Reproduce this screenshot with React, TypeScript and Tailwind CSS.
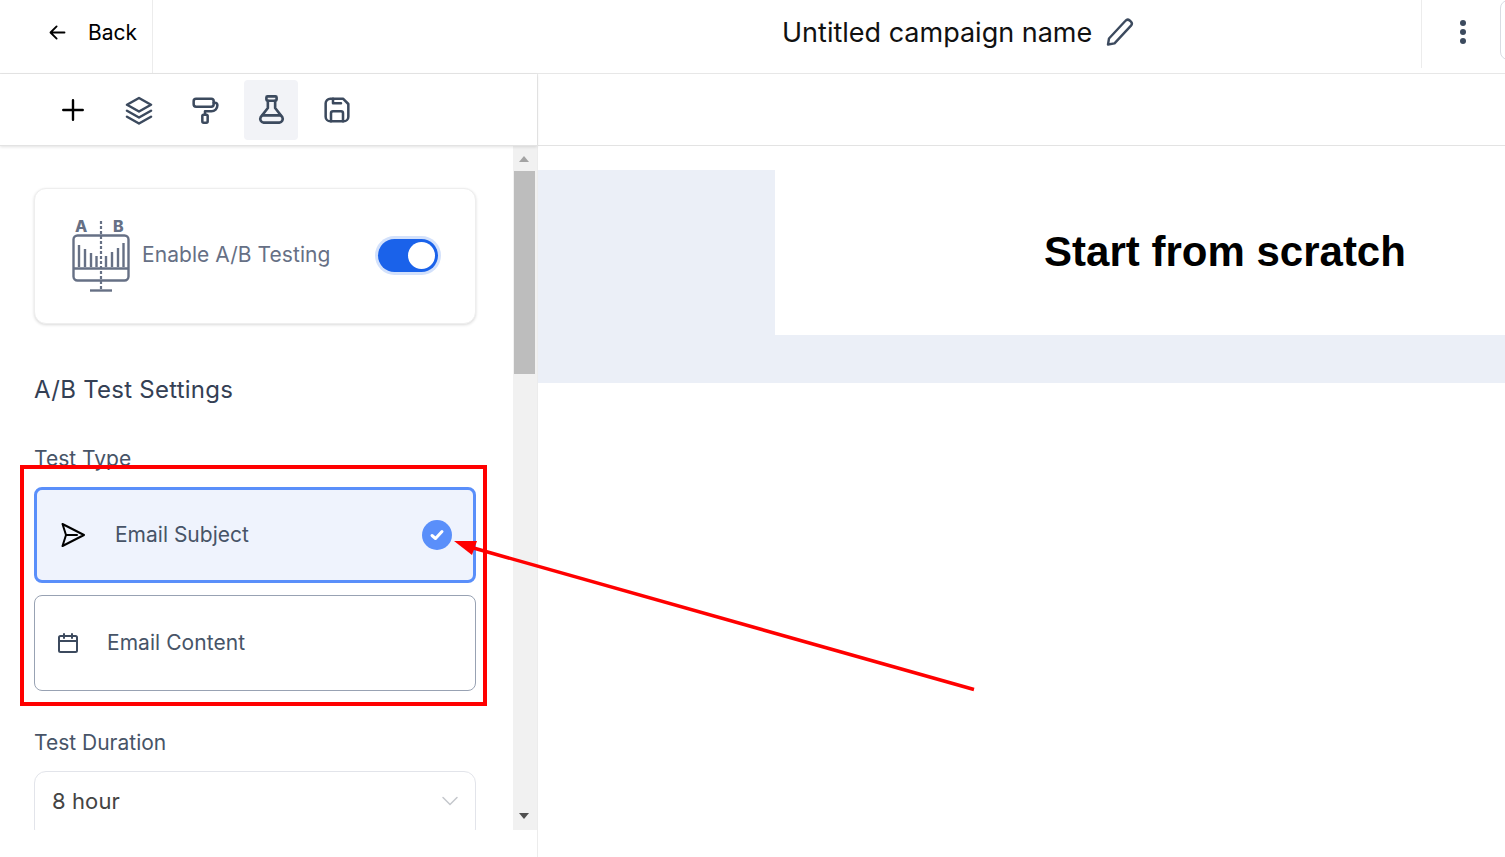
import React from "react";

const ink = "#3c4a5e";

function Svg({ size = 24, sw = 2, color = ink, children }: { size?: number; sw?: number; color?: string; children: React.ReactNode }) {
  return (
    <svg width={size} height={size} viewBox="0 0 24 24" fill="none" stroke={color} strokeWidth={sw} strokeLinecap="round" strokeLinejoin="round">
      {children}
    </svg>
  );
}

function AbIcon() {
  const c = "#667085";
  const bars = [[7, 10], [13, 14], [19, 18], [24.5, 21], [34, 21], [40, 17], [46, 13], [51.5, 8]];
  return (
    <svg className="-mt-[8px]" width="58" height="82" viewBox="0 -8 58 82" fill="none" stroke={c}>
      <rect x="1.5" y="17.5" width="55" height="45" rx="4" strokeWidth="2.4" />
      <path d="M1.5 50.5H56.5" strokeWidth="2.4" />
      <path d="M29 3V71" strokeWidth="2.2" strokeDasharray="3 2" />
      <path d="M18 72.5H40" strokeWidth="2.4" />
      {bars.map(([x, y], i) => (
        <path key={i} d={`M${x} ${y + 17}V49`} strokeWidth="2.4" />
      ))}
      <text x="3" y="14" fill={c} stroke="none" fontSize="16" fontWeight="800" fontFamily="Inter, sans-serif">A</text>
      <text x="41" y="14" fill={c} stroke="none" fontSize="16" fontWeight="800" fontFamily="Inter, sans-serif">B</text>
    </svg>
  );
}

function ToolButton({ active, children }: { active?: boolean; children: React.ReactNode }) {
  return (
    <div className={`w-[54px] h-[60px] flex items-center justify-center rounded ${active ? "bg-[#f2f3f7]" : ""}`}>{children}</div>
  );
}

export default function App() {
  return (
    <div className="relative w-[1505px] h-[857px] overflow-hidden bg-white font-['Inter',sans-serif]">
      {/* Header */}
      <header className="flex h-[74px] border-b border-[#e7e7e7]">
        <div className="w-[153px] h-[73px] border-r border-[#ececec] flex items-center pl-[47px] pb-[9px] gap-[20px]">
          <svg width="21" height="21" viewBox="0 0 24 24" fill="none" stroke="#000" strokeWidth="2.1" strokeLinecap="round" strokeLinejoin="round">
            <path d="M20 12H4.5M11 5l-7 7 7 7" />
          </svg>
          <span className="text-[21px] leading-none text-black">Back</span>
        </div>
        <div className="flex-1 flex items-center pl-[629px] pb-[9px] gap-[13px]">
          <span className="text-[27px] leading-none text-[#111]">Untitled campaign name</span>
          <svg width="30" height="30" viewBox="0 0 30 30" fill="none" stroke={ink} strokeWidth="2.4" strokeLinecap="round" strokeLinejoin="round">
            <path d="M3 27.5l1-6L20.5 3.8a3 3 0 0 1 4.2-.3l1 .9a3 3 0 0 1 .3 4.2L9.5 26.4z" />
          </svg>
        </div>
        <div className="w-[84px] h-[68px] border-l border-[#ececec] flex items-center pl-[38px] pb-[4px] relative">
          <div className="flex flex-col gap-[3px]">
            <div className="w-[6px] h-[6px] rounded-full bg-[#3c4a5e]" />
            <div className="w-[6px] h-[6px] rounded-full bg-[#3c4a5e]" />
            <div className="w-[6px] h-[6px] rounded-full bg-[#3c4a5e]" />
          </div>
          <div className="absolute left-[78px] top-0 w-[20px] h-[60px] rounded-lg border border-[#d9dce3]" />
        </div>
      </header>

      <div className="flex h-[783px]">
        {/* Left column */}
        <div className="w-[538px] border-r border-[#ececec] flex flex-col">
          <div className="h-[72px] flex items-center pl-[46px] gap-[12px] shrink-0 border-b border-[#e3e3e3] shadow-[0_1px_3px_rgba(0,0,0,0.12)] relative">
            <ToolButton>
              <svg width="26" height="26" viewBox="0 0 24 24" fill="none" stroke="#000" strokeWidth="2.2" strokeLinecap="round"><path d="M12 3v18M3 12h18" /></svg>
            </ToolButton>
            <ToolButton>
              <Svg size={36} sw={1.7}><path d="M12 4L4 8.5 12 13l8-4.5z" /><path d="M4 12.5L12 17l8-4.5" /><path d="M4 16.5L12 21l8-4.5" /></Svg>
            </ToolButton>
            <ToolButton>
              <Svg size={32} sw={1.9}><rect x="3.5" y="3.5" width="15" height="6" rx="1.8" /><path d="M18.5 6.5h.8a2 2 0 0 1 2 2 4.5 4.5 0 0 1-4.5 4.5H12v2.5" /><rect x="10" y="15.5" width="4" height="6" rx="1" /></Svg>
            </ToolButton>
            <ToolButton active>
              <Svg size={35} sw={1.8}><rect x="8.5" y="3" width="7" height="3" rx=".8" /><path d="M9.5 6v5L4.6 17.2A2.6 2.6 0 0 0 6.6 21h10.8a2.6 2.6 0 0 0 2-3.8L14.5 11V6" /><path d="M6 16h12" /></Svg>
            </ToolButton>
            <ToolButton>
              <Svg size={32} sw={1.9}><path d="M7 3.5h9.5l4 4V17a3.5 3.5 0 0 1-3.5 3.5H7A3.5 3.5 0 0 1 3.5 17V7A3.5 3.5 0 0 1 7 3.5z" /><path d="M7.5 20.5v-6a1.5 1.5 0 0 1 1.5-1.5h6a1.5 1.5 0 0 1 1.5 1.5v6" /><path d="M9 3.5V7h6" /></Svg>
            </ToolButton>
          </div>

          <div className="flex h-[684px] shrink-0">
            <div className="w-[513px] h-full overflow-hidden pl-[34px] pr-[37px] pt-[42px]">
              <div className="h-[136px] rounded-xl bg-white border border-[#eeeeee] shadow-[0_1px_3px_rgba(0,0,0,0.15)] flex items-center pl-[37px] pb-[2px]">
                <AbIcon />
                <span className="ml-[12px] text-[21px] tracking-[0.05px] text-[#667085] leading-none -mt-[1px]">Enable A/B Testing</span>
                <div className="ml-[48px] w-[60px] h-[33px] rounded-full bg-[#1a62ea] ring-[3px] ring-[#d3e1fb] flex items-center justify-end pr-[3px]">
                  <div className="w-[27px] h-[27px] rounded-full bg-white" />
                </div>
              </div>

              <h2 className="mt-[52px] text-[24px] tracking-[0.25px] leading-[28px] font-normal text-[#344054]">A/B Test Settings</h2>

              <div className="mt-[43px] text-[21px] leading-[24px] text-[#475467]">Test Type</div>

              <div className="mt-[16px] h-[96px] rounded-lg bg-[#eff3fd] border-[3px] border-[#5a8ffa] flex items-center pl-[23px] pr-[21px]">
                <svg width="26" height="28" viewBox="0 0 26 28" fill="none" stroke="#000" strokeWidth="2" strokeLinejoin="round" strokeLinecap="round">
                  <path d="M2.5 3L24 14 2.5 25 6 14z" /><path d="M6 14h11" />
                </svg>
                <span className="ml-[29px] -mt-[1px] text-[21px] leading-none text-[#475467]">Email Subject</span>
                <div className="ml-auto w-[30px] h-[30px] rounded-full bg-[#5a8ffa] flex items-center justify-center">
                  <svg width="18" height="18" viewBox="0 0 18 18" fill="none" stroke="#fff" strokeWidth="3" strokeLinecap="round" strokeLinejoin="round"><path d="M4 9.5l3.5 3L14 5.5" /></svg>
                </div>
              </div>

              <div className="mt-[12px] h-[96px] rounded-lg bg-white border border-[#98a2b3] flex items-center pl-[21px]">
                <Svg size={24} sw={2}><rect x="3" y="5" width="18" height="16" rx="1.5" /><path d="M8 3v4M16 3v4M3 10h18" /></Svg>
                <span className="ml-[27px] -mt-[1px] text-[21px] tracking-[0.05px] leading-none text-[#475467]">Email Content</span>
              </div>

              <div className="mt-[40px] text-[21px] leading-[24px] text-[#475467]">Test Duration</div>

              <div className="mt-[16px] h-[70px] rounded-xl border border-[#e2e4ea] flex items-start pt-[15px] pl-[17px] pr-[16px]">
                <span className="text-[22px] tracking-[0.1px] leading-[28px] text-[#444]">8 hour</span>
                <svg className="ml-auto mt-[5px]" width="18" height="18" viewBox="0 0 18 18" fill="none" stroke="#c4c7cc" strokeWidth="1.5" strokeLinecap="round"><path d="M2 5.5l7 7 7-7" /></svg>
              </div>
            </div>

            {/* Scrollbar */}
            <div className="w-[24px] h-full bg-[#f1f1f1] flex flex-col items-start pt-[10px]">
              <div className="ml-[6px] w-0 h-0 border-l-[5px] border-r-[5px] border-b-[6px] border-l-transparent border-r-transparent border-b-[#a3a3a3]" />
              <div className="ml-[1px] mt-[9px] w-[21px] h-[203px] bg-[#bdbdbd]" />
              <div className="ml-[6px] mt-auto mb-[11px] w-0 h-0 border-l-[5px] border-r-[5px] border-t-[6px] border-l-transparent border-r-transparent border-t-[#505050]" />
            </div>
          </div>
        </div>

        {/* Right column */}
        <div className="flex-1 flex flex-col">
          <div className="h-[72px] border-b border-[#e3e3e3] shrink-0" />
          <div className="mt-[24px] bg-[#ebeff7] h-[213px] flex items-start pl-[237px]">
            <div className="flex-1 h-[165px] bg-white flex items-center justify-center pl-[170px] pb-[2px]">
              <h1 className="font-['Liberation_Sans',Arial,sans-serif] font-bold text-[42px] leading-none text-black whitespace-nowrap">Start from scratch</h1>
            </div>
          </div>
        </div>
      </div>

      {/* Annotation overlay */}
      <div className="absolute left-[20px] top-[465px] w-[467px] h-[241px] border-4 border-[#ff0000] pointer-events-none" />
      <svg className="absolute left-0 top-0 pointer-events-none" width="1505" height="857" fill="none">
        <path d="M974 689.5L470 547" stroke="#ff0000" strokeWidth="3.5" />
        <path d="M454 541L477 541 472 555z" fill="#ff0000" />
      </svg>
    </div>
  );
}
